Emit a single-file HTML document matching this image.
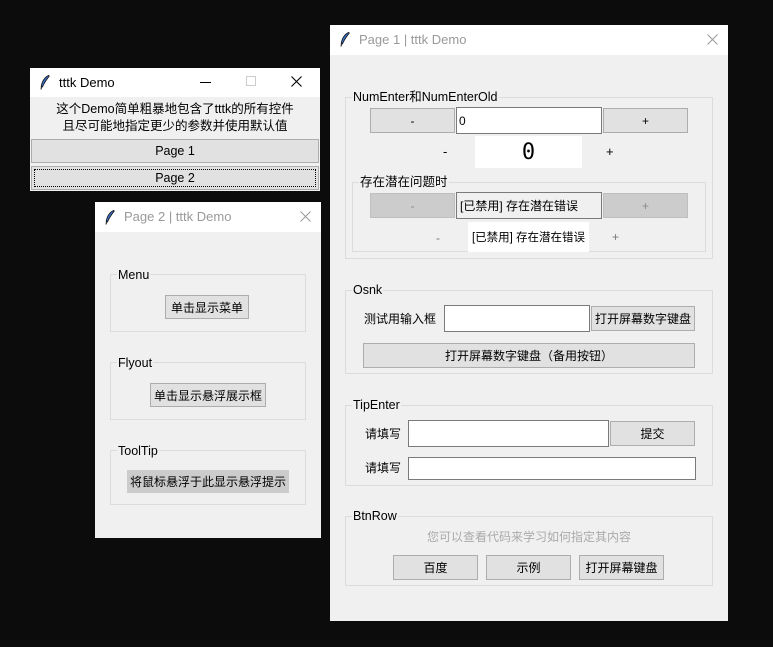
<!DOCTYPE html>
<html><head><meta charset="utf-8">
<style>
*{margin:0;padding:0;box-sizing:border-box}
body{width:773px;height:647px;background:#0c0c0c;position:relative;overflow:hidden;font-family:"Liberation Sans","Noto Sans CJK SC",sans-serif;font-size:12px;color:#000}
.a{position:absolute}
.win{position:absolute;background:#f0f0f0}
.tb{position:absolute;left:0;top:0;right:0;background:#fff;font-size:13px;color:#999}
.btn{position:absolute;background:#e1e1e1;border:1px solid #adadad;display:flex;align-items:center;justify-content:center;white-space:nowrap}
.dis{background:#cccccc;border-color:#bfbfbf;color:#8a8a8a}
.ent{position:absolute;background:#fff;border:1px solid #7a7a7a;display:flex;align-items:center;padding-left:2px;white-space:nowrap}
.lf{position:absolute;border:1px solid #dcdcdc}
.lb{position:absolute;background:#f0f0f0;padding:0 1px;line-height:14px;white-space:nowrap}
.t{position:absolute;white-space:nowrap;line-height:14px}
.wb{position:absolute;background:#fff;display:flex;align-items:center;justify-content:center;white-space:nowrap}
</style></head><body>

<!-- Main window -->
<div class="win" style="left:30px;top:68px;width:290px;height:123px">
  <div class="tb" style="height:29px;color:#000">
    <svg class="a" style="left:10px;top:7px" width="10" height="15" viewBox="0 0 10 15"><path d="M8.5 0.5C5 2 2 6 1.2 11.5L2.5 12C4 8 7 4 9.3 1Z" fill="#3a6fc4" stroke="#111" stroke-width="0.8"/><path d="M1.5 11.5L1 14.5" stroke="#111" stroke-width="1"/></svg>
    <div class="t" style="left:29px;top:8px;font-size:13px">tttk Demo</div>
    <div class="a" style="left:170px;top:14px;width:11px;height:1px;background:#000"></div>
    <div class="a" style="left:216px;top:8px;width:10px;height:10px;border:1px solid #ccc"></div>
    <svg class="a" style="left:261px;top:8px" width="11" height="11"><path d="M0.5 0.5L10.5 10.5M10.5 0.5L0.5 10.5" stroke="#000" stroke-width="1.1"/></svg>
  </div>
  <div class="t" style="left:0;width:290px;text-align:center;top:34px;font-size:12.5px">这个Demo简单粗暴地包含了tttk的所有控件</div>
  <div class="t" style="left:0;width:290px;text-align:center;top:51px;font-size:12.5px">且尽可能地指定更少的参数并使用默认值</div>
  <div class="btn" style="left:1px;top:71px;width:288px;height:24px;font-size:12.5px">Page 1</div>
  <div class="btn" style="left:1px;top:98px;width:288px;height:24px;font-size:12.5px"><div class="a" style="left:2px;top:2px;right:2px;bottom:2px;border:1px dotted #000"></div>Page 2</div>
</div>

<!-- Page 2 window -->
<div class="win" style="left:95px;top:202px;width:226px;height:336px">
  <div class="tb" style="height:30px">
    <svg class="a" style="left:10px;top:8px" width="10" height="15" viewBox="0 0 10 15"><path d="M8.5 0.5C5 2 2 6 1.2 11.5L2.5 12C4 8 7 4 9.3 1Z" fill="#3a6fc4" stroke="#111" stroke-width="0.8"/><path d="M1.5 11.5L1 14.5" stroke="#111" stroke-width="1"/></svg>
    <div class="t" style="left:29px;top:8px">Page 2 | tttk Demo</div>
    <svg class="a" style="left:205px;top:9px" width="11" height="11"><path d="M0.5 0.5L10.5 10.5M10.5 0.5L0.5 10.5" stroke="#999" stroke-width="1"/></svg>
  </div>
  <div class="lf" style="left:15px;top:72px;width:196px;height:58px"></div>
  <div class="lb" style="left:22px;top:66px;font-size:12.5px">Menu</div>
  <div class="btn" style="left:70px;top:93px;width:84px;height:24px">单击显示菜单</div>
  <div class="lf" style="left:15px;top:160px;width:196px;height:58px"></div>
  <div class="lb" style="left:22px;top:154px;font-size:12.5px">Flyout</div>
  <div class="btn" style="left:55px;top:181px;width:116px;height:24px">单击显示悬浮展示框</div>
  <div class="lf" style="left:15px;top:248px;width:196px;height:55px"></div>
  <div class="lb" style="left:22px;top:242px;font-size:12.5px">ToolTip</div>
  <div class="a" style="left:32px;top:268px;width:162px;height:23px;background:#cccccc;display:flex;align-items:center;justify-content:center;white-space:nowrap">将鼠标悬浮于此显示悬浮提示</div>
</div>

<!-- Page 1 window -->
<div class="win" style="left:330px;top:25px;width:398px;height:596px">
  <div class="tb" style="height:30px">
    <svg class="a" style="left:10px;top:7px" width="10" height="15" viewBox="0 0 10 15"><path d="M8.5 0.5C5 2 2 6 1.2 11.5L2.5 12C4 8 7 4 9.3 1Z" fill="#3a6fc4" stroke="#111" stroke-width="0.8"/><path d="M1.5 11.5L1 14.5" stroke="#111" stroke-width="1"/></svg>
    <div class="t" style="left:29px;top:8px">Page 1 | tttk Demo</div>
    <svg class="a" style="left:377px;top:9px" width="11" height="11"><path d="M0.5 0.5L10.5 10.5M10.5 0.5L0.5 10.5" stroke="#999" stroke-width="1"/></svg>
  </div>
  <!-- NumEnter -->
  <div class="lf" style="left:15px;top:72px;width:368px;height:162px"></div>
  <div class="lb" style="left:22px;top:65px;font-size:12.5px">NumEnter和NumEnterOld</div>
  <div class="btn" style="left:40px;top:83px;width:85px;height:25px">-</div>
  <div class="ent" style="left:126px;top:82px;width:146px;height:27px">0</div>
  <div class="btn" style="left:273px;top:83px;width:85px;height:25px">+</div>
  <div class="t" style="left:113px;top:120px;font-size:13px">-</div>
  <div class="wb" style="left:145px;top:111px;width:107px;height:32px;font-family:'DejaVu Sans Mono',monospace;font-size:22px">0</div>
  <div class="t" style="left:276px;top:120px;font-size:13px">+</div>
  <div class="lf" style="left:22px;top:157px;width:354px;height:70px"></div>
  <div class="lb" style="left:29px;top:150px;font-size:12.5px">存在潜在问题时</div>
  <div class="btn dis" style="left:40px;top:168px;width:85px;height:25px">-</div>
  <div class="ent" style="left:126px;top:167px;width:146px;height:27px;background:#f0f0f0;padding-left:3px">[已禁用] 存在潜在错误</div>
  <div class="btn dis" style="left:273px;top:168px;width:85px;height:25px">+</div>
  <div class="t" style="left:106px;top:206px;color:#777">-</div>
  <div class="wb" style="left:138px;top:197px;width:121px;height:30px;font-size:11.5px">[已禁用] 存在潜在错误</div>
  <div class="t" style="left:282px;top:205px;color:#777">+</div>
  <!-- Osnk -->
  <div class="lf" style="left:15px;top:265px;width:368px;height:84px"></div>
  <div class="lb" style="left:22px;top:258px;font-size:12.5px">Osnk</div>
  <div class="t" style="left:34px;top:287px">测试用输入框</div>
  <div class="ent" style="left:114px;top:280px;width:146px;height:27px"></div>
  <div class="btn" style="left:261px;top:281px;width:104px;height:25px">打开屏幕数字键盘</div>
  <div class="btn" style="left:33px;top:318px;width:332px;height:25px">打开屏幕数字键盘（备用按钮）</div>
  <!-- TipEnter -->
  <div class="lf" style="left:15px;top:380px;width:368px;height:81px"></div>
  <div class="lb" style="left:22px;top:373px;font-size:12.5px">TipEnter</div>
  <div class="t" style="left:35px;top:402px">请填写</div>
  <div class="ent" style="left:78px;top:395px;width:201px;height:27px"></div>
  <div class="btn" style="left:280px;top:396px;width:85px;height:25px">提交</div>
  <div class="t" style="left:35px;top:436px">请填写</div>
  <div class="ent" style="left:78px;top:432px;width:288px;height:23px"></div>
  <!-- BtnRow -->
  <div class="lf" style="left:15px;top:491px;width:368px;height:70px"></div>
  <div class="lb" style="left:22px;top:484px;font-size:12.5px">BtnRow</div>
  <div class="t" style="left:0;width:398px;text-align:center;top:505px;color:#aaa">您可以查看代码来学习如何指定其内容</div>
  <div class="btn" style="left:63px;top:530px;width:85px;height:25px">百度</div>
  <div class="btn" style="left:156px;top:530px;width:85px;height:25px">示例</div>
  <div class="btn" style="left:249px;top:530px;width:85px;height:25px">打开屏幕键盘</div>
</div>
</body></html>
